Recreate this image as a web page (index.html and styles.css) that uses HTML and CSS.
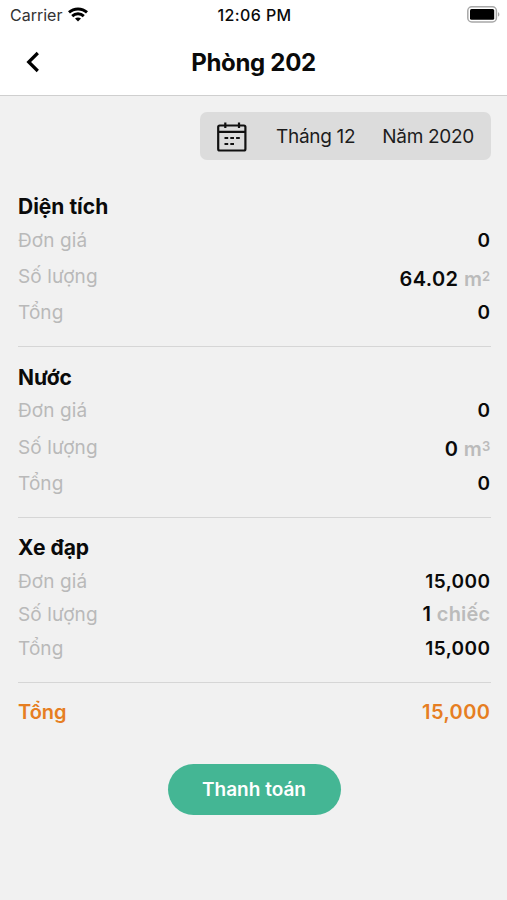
FILE: index.html
```html
<!DOCTYPE html>
<html lang="vi">
<head>
  <meta charset="UTF-8" />
  <meta name="viewport" content="width=device-width, initial-scale=1" />
  <title>Phòng 202</title>
  <link rel="stylesheet" href="styles.css">
</head>
<body>
  <header class="header">
    <div class="status-bar">
      <div class="carrier">
        <span>Carrier</span>
        <svg class="wifi" viewBox="0 0 20 15" fill="none" stroke="#000" stroke-width="2.9">
          <path d="M1 5.400C6 .8 14 .8 19 5.400" />
          <path d="M4.200 9.100c3.300-3.100 8.300-3.100 11.600 0" />
          <path d="M10 14.600l-3-3c1.700-1.500 4.300-1.500 6 0z" fill="#000" stroke="none" />
        </svg>
      </div>
      <div class="clock">12:06 PM</div>
      <svg class="battery" viewBox="0 0 33 17">
        <rect x=".8" y=".8" width="28.600" height="15.200" rx="4" fill="#fff" stroke="#a8a8a8" stroke-width="1.500" />
        <rect x="3" y="3" width="24.200" height="10.800" rx="1.500" fill="#000" />
        <path d="M31 6.200c1.800.6 1.800 3.800 0 4.400z" fill="#a8a8a8" />
      </svg>
    </div>
    <div class="nav">
      <svg class="back" viewBox="0 0 14 22" fill="none" stroke="#000" stroke-width="3.2">
        <path d="M11.800 2L2.700 11l9.100 9" />
      </svg>
      <h1 class="nav-title">Phòng 202</h1>
    </div>
  </header>

  <main class="content">
    <div class="date-picker">
      <svg class="calendar" viewBox="0 0 30 30" fill="none" stroke="#111" stroke-width="2.200">
        <rect x="1.200" y="3.500" width="27.200" height="25" rx="1.500" />
        <path d="M1.200 9.800h27.200M8.300 .5v5.500M22 .5v5.500" />
        <path d="M7.500 16h3.700M13.300 16h3.700M19.100 16h3.700M7.500 22h3.700M13.300 22h3.700" />
      </svg>
      <span class="month">Tháng 12</span>
      <span class="year">Năm 2020</span>
    </div>

    <section class="item">
      <h2 class="item-title">Diện tích</h2>
      <div class="row"><span class="label">Đơn giá</span><span class="value">0</span></div>
      <div class="row tall"><span class="label">Số lượng</span><span class="value amount">64.02 <span class="unit">m<small>2</small></span></span></div>
      <div class="row"><span class="label">Tổng</span><span class="value">0</span></div>
    </section>

    <section class="item">
      <h2 class="item-title">Nước</h2>
      <div class="row"><span class="label">Đơn giá</span><span class="value">0</span></div>
      <div class="row tall"><span class="label">Số lượng</span><span class="value amount">0 <span class="unit">m<small>3</small></span></span></div>
      <div class="row"><span class="label">Tổng</span><span class="value">0</span></div>
    </section>

    <section class="item">
      <h2 class="item-title">Xe đạp</h2>
      <div class="row"><span class="label">Đơn giá</span><span class="value">15,000</span></div>
      <div class="row"><span class="label">Số lượng</span><span class="value amount">1 <span class="unit">chiếc</span></span></div>
      <div class="row"><span class="label">Tổng</span><span class="value">15,000</span></div>
    </section>

    <div class="total">
      <span>Tổng</span>
      <span class="total-value">15,000</span>
    </div>

    <button class="pay">Thanh toán</button>
  </main>
</body>
</html>
```
FILE: styles.css
```css
* {
  margin: 0;
  padding: 0;
  box-sizing: border-box;
}

body {
  height: 100vh;
  overflow: hidden;
  background: #f1f1f1;
  color: #0a0a0a;
  font-family: Inter, "Noto Sans", sans-serif;
}

.header {
  height: 96px;
  background: #fff;
  border-bottom: 1px solid #cfcfcf;
}

.status-bar {
  display: grid;
  grid-template-columns: 1fr auto 1fr;
  align-items: center;
  height: 29px;
  padding: 0 7px 0 10px;
  font-size: 16px;
}

.carrier {
  display: flex;
  align-items: center;
  gap: 6px;
  color: #333;
}

.wifi {
  width: 20px;
  height: 15px;
}

.clock {
  padding-right: 1px;
  font-weight: 500;
  letter-spacing: 0.4px;
}

.battery {
  width: 33px;
  height: 17px;
  justify-self: end;
}

.nav {
  display: grid;
  grid-template-columns: 1fr auto 1fr;
  align-items: center;
  height: 66px;
  padding: 0 26px;
}

.back {
  width: 14px;
  height: 22px;
}

.nav-title {
  font-size: 24px;
  font-weight: 700;
  letter-spacing: -0.3px;
}

.content {
  display: flex;
  flex-direction: column;
  padding: 16px 16px 0 18px;
}

.date-picker {
  display: flex;
  align-items: center;
  align-self: flex-end;
  width: 291px;
  height: 48px;
  margin-bottom: 30px;
  padding: 1px 17px 0;
  background: #dcdcdc;
  border-radius: 7px;
  color: #1c1c1c;
  font-size: 19px;
  letter-spacing: -0.3px;
}

.calendar {
  width: 30px;
  height: 30px;
}

.month {
  margin-left: 29px;
}

.year {
  margin-left: auto;
}

.item {
  padding-bottom: 16.5px;
  border-bottom: 1px solid #d6d6d6;
  margin-bottom: 13.5px;
}

.item-title {
  font-size: 21px;
  font-weight: 700;
  line-height: 33.5px;
}

.row {
  display: flex;
  justify-content: space-between;
  height: 33.5px;
  font-size: 19px;
  line-height: 33.5px;
}

.tall {
  height: 39px;
  line-height: 39px;
}

.tall .value {
  padding-top: 2.5px;
}

.label {
  color: #b9b9b9;
  letter-spacing: 0.1px;
}

.value {
  padding-right: 0.6px;
  font-weight: 600;
  letter-spacing: 0.4px;
}

.amount {
  font-size: 20px;
}

.unit {
  color: #bbb;
  letter-spacing: 0.2px;
}

.unit small {
  font-size: 13px;
  line-height: 1;
  vertical-align: 5px;
}

.total {
  display: flex;
  justify-content: space-between;
  color: #e67e22;
  font-size: 20px;
  font-weight: 600;
  line-height: 32px;
}

.total-value {
  padding-right: 0.6px;
  letter-spacing: 0.4px;
}

.pay {
  align-self: center;
  width: 173px;
  height: 51px;
  margin-top: 36px;
  margin-right: 1px;
  border: none;
  border-radius: 26px;
  background: #44b694;
  color: #fff;
  font: 600 19px Inter, "Noto Sans", sans-serif;
}
```
